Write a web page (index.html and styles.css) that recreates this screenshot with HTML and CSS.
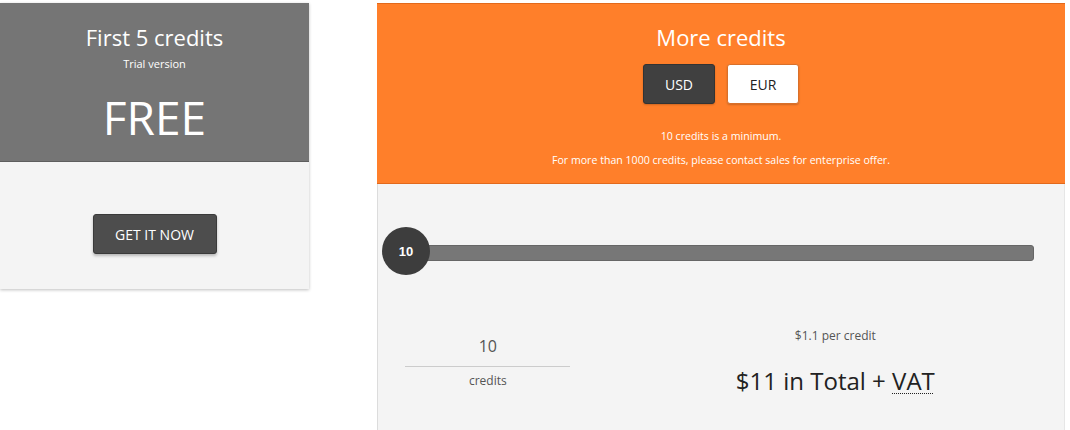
FILE: index.html
```html
<!DOCTYPE html>
<html>
<head>
<meta charset="utf-8">
<link rel="stylesheet" href="styles.css">
</head>
<body>
<div class="page">
  <div class="card trial">
    <div class="trial-head">
      <h2 class="title">First 5 credits</h2>
      <div class="sub">Trial version</div>
      <div class="free">FREE</div>
    </div>
    <div class="trial-body">
      <button class="btn-dark">GET IT NOW</button>
    </div>
  </div>
  <div class="card more">
    <div class="more-head">
      <h2 class="title">More credits</h2>
      <div class="currencies">
        <button class="cur cur-active">USD</button>
        <button class="cur">EUR</button>
      </div>
      <p class="note first">10 credits is a minimum.</p>
      <p class="note">For more than 1000 credits, please contact sales for enterprise offer.</p>
    </div>
    <div class="more-body">
      <div class="slider">
        <div class="track"></div>
        <div class="handle">10</div>
      </div>
      <div class="result">
        <div class="qty-col">
          <div class="qty">10</div>
          <div class="qty-label">credits</div>
        </div>
        <div class="price-col">
          <div class="per">$1.1 per credit</div>
          <div class="total">$11 in Total + <span class="vat">VAT</span></div>
        </div>
      </div>
    </div>
  </div>
</div>
</body>
</html>
```
FILE: styles.css
```css
* { box-sizing: border-box; }
html, body { margin: 0; padding: 0; background: #fff; }
body { font-family: "Open Sans", "Liberation Sans", sans-serif; }
.page { display: flex; align-items: flex-start; gap: 68px; padding-top: 3px; }
.card { display: flex; flex-direction: column; }
.trial { width: 309px; box-shadow: 0 1px 3px rgba(0,0,0,0.25); }
.title { margin: 0; font-weight: 400; font-size: 22px; line-height: 30px; color: #fff; text-align: center; }
.trial-head { background: #757575; height: 159px; padding-top: 19px; text-align: center; color: #fff; border-bottom: 1px solid #5e5e5e; }
.sub { font-size: 11px; line-height: 16px; margin-top: 4px; }
.free { font-size: 46px; line-height: 46px; margin-top: 22px; }
.trial-body { background: #f4f4f4; height: 127px; display: flex; justify-content: center; padding-top: 52px; }
.btn-dark { width: 124px; height: 40px; background: #4d4d4d; color: #fff; border: 1px solid #3a3a3a; border-radius: 3px; font-family: inherit; font-size: 14px; box-shadow: 0 2px 3px rgba(0,0,0,0.25); cursor: pointer; }
.more { width: 688px; }
.more-head { background: #ff7f2a; height: 181px; padding-top: 18px; text-align: center; border-top: 1px solid #e2691c; border-bottom: 1px solid #e2691c; }
.currencies { display: flex; justify-content: center; gap: 12px; margin-top: 12px; }
.cur { width: 72px; height: 40px; border-radius: 3px; font-family: inherit; font-size: 14px; background: #fff; color: #222; border: 1px solid #d9702a; box-shadow: 0 1px 2px rgba(0,0,0,0.2); cursor: pointer; }
.cur-active { background: #404040; color: #fff; border-color: #333; }
.note { margin: 0; font-size: 10.6px; line-height: 16px; color: #fff; }
.note.first { margin-top: 24px; margin-bottom: 8px; }
.more-body { background: #f4f4f4; border-left: 1px solid #dcdcdc; border-right: 1px solid #e6e6e6; height: 260px; padding-top: 43px; }
.slider { position: relative; height: 48px; margin-left: 4px; margin-right: 30px; display: flex; align-items: center; }
.track { margin-left: 33px; margin-top: 4px; flex: 1; height: 16px; background: #777; border-radius: 3px; border: 1px solid #666; }
.handle { position: absolute; left: 0; top: 0; width: 48px; height: 48px; border-radius: 50%; background: #3d3d3d; color: #fff; font-weight: 700; font-size: 13px; display: flex; align-items: center; justify-content: center; font-family: "Liberation Sans", Arial, sans-serif; }
.result { display: grid; grid-template-columns: 1fr 2fr; margin-top: 44px; }
.qty-col { display: flex; flex-direction: column; align-items: center; padding-right: 9px; }
.qty { width: 165px; text-align: center; font-size: 16px; line-height: 24px; color: #555; padding-top: 15px; padding-bottom: 8px; border-bottom: 1px solid #ccc; }
.qty-label { font-size: 12px; line-height: 18px; color: #555; margin-top: 5px; }
.price-col { text-align: center; }
.per { font-size: 12px; line-height: 18px; color: #555; margin-top: 8px; }
.total { font-size: 24px; line-height: 34px; color: #222; margin-top: 19px; }
.vat { text-decoration: underline dotted; text-underline-offset: 3px; text-decoration-thickness: 1px; }
```
